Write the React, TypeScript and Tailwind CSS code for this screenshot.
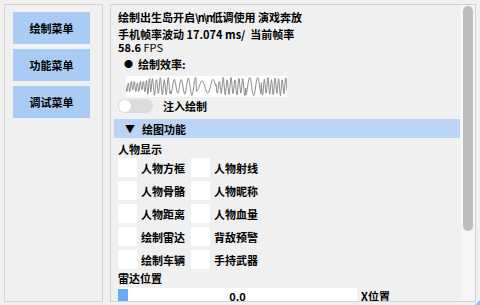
import React from "react";

function Wave() {
  const pts: string[] = [];
  const w = 161;
  const h = 21;
  for (let i = 0; i <= 320; i++) {
    const x = (i / 320) * w;
    const t = x;
    let f = 0.9;
    if (t < 25) f = 1.3;
    else if (t < 45) f = 1.0;
    else if (t < 70) f = 0.55;
    else if (t < 90) f = 0.35;
    else if (t < 120) f = 1.0;
    else if (t < 135) f = 0.5;
    else f = 1.1;
    const amp = t < 20 ? 5 : t < 70 ? 8 : t < 95 ? 6 : 8;
    const y = h / 2 + Math.sin(t * f * 1.6) * amp + Math.sin(t * 0.7) * 1.2;
    pts.push(`${x.toFixed(2)},${y.toFixed(2)}`);
  }
  return (
    <svg width={w} height={h} className="block">
      <polyline points={pts.join(" ")} fill="none" stroke="#8c8c8c" strokeWidth="1" />
    </svg>
  );
}

function Check({ label }: { label: string }) {
  return (
    <div className="flex items-center w-[73px] shrink-0">
      <div className="w-[19px] h-[19px] bg-white shrink-0" />
      <span className="ml-[4px] whitespace-nowrap">{label}</span>
    </div>
  );
}

export default function App() {
  const rows = [
    ["人物方框", "人物射线"],
    ["人物骨骼", "人物昵称"],
    ["人物距离", "人物血量"],
    ["绘制雷达", "背敌预警"],
    ["绘制车辆", "手持武器"],
  ];
  return (
    <div
      className="w-[480px] h-[305px] bg-[#f0f0f0] p-[4px] flex gap-[7px] text-[11px] leading-[14px] text-black font-semibold overflow-hidden relative"
      style={{ fontFamily: '"Noto Sans CJK SC", "Noto Sans", sans-serif' }}
    >
      <div className="w-[99px] h-[298px] border border-[#d2d2d2] shrink-0 pl-[8px] pt-[7px] flex flex-col gap-[5px]">
        {["绘制菜单", "功能菜单", "调试菜单"].map((t) => (
          <div key={t} className="w-[77px] h-[32px] bg-[#aaccf4] flex items-center justify-center">
            {t}
          </div>
        ))}
      </div>
      <div className="flex-1 h-[298px] border border-[#d2d2d2] flex overflow-hidden">
        <div className="flex-1 flex flex-col overflow-hidden pl-[3px] pr-[1px] pt-[5px]">
          <div className="pl-[4px] flex flex-col">
            <div className="whitespace-nowrap h-[14px]">
              绘制出生岛开启<span className="tracking-[-1.5px]">\n\n</span>低调使用 演戏奔放
            </div>
            <div className="mt-[4px] leading-[13px]">
              <div className="whitespace-nowrap h-[13px]">
                手机帧率波动 <span className="font-bold">17.074</span> ms/&nbsp; 当前帧率
              </div>
              <div className="whitespace-nowrap h-[13px]">
                <span className="font-bold">58.6</span> <span className="font-normal">FPS</span>
              </div>
            </div>
            <div className="mt-[3px] flex items-center h-[13px]">
              <span className="ml-[6px] text-[9px]">●</span>
              <span className="ml-[5px]">绘制效率:</span>
            </div>
            <div className="mt-[6px] ml-[8px] w-[161px] h-[21px] bg-white flex items-center">
              <Wave />
            </div>
            <div className="mt-[2px] flex items-center h-[14px]">
              <div className="w-[35px] h-[14px] rounded-full bg-[#dcdcdc] relative">
                <div className="absolute left-[1px] top-[1px] w-[12px] h-[12px] rounded-full bg-white" />
              </div>
              <span className="ml-[10px]">注入绘制</span>
            </div>
          </div>
          <div className="mt-[6px] h-[19px] shrink-0 bg-[#bad4f3] flex items-center">
            <span className="ml-[11px] text-[10px]">▼</span>
            <span className="ml-[7px]">绘图功能</span>
          </div>
          <div className="pl-[4px] flex flex-col">
            <div className="mt-[4px] h-[14px]">人物显示</div>
            <div className="mt-[2px] flex flex-col gap-[4px]">
              {rows.map((r) => (
                <div key={r[0]} className="flex h-[19px]">
                  <Check label={r[0]} />
                  <Check label={r[1]} />
                </div>
              ))}
            </div>
            <div className="mt-[2px] h-[14px]">雷达位置</div>
            <div className="mt-[3px] flex items-start shrink-0">
              <div className="w-[239px] h-[19px] bg-white relative flex justify-center">
                <div className="absolute left-0 top-[1px] w-[10px] h-[17px] bg-[#68aaf8]" />
                <span className="font-bold mt-[1px]">0.0</span>
              </div>
              <span className="ml-[4px] mt-[1px]">X位置</span>
            </div>
          </div>
        </div>
        <div className="w-[14px] shrink-0 bg-[#f5f5f5] pt-[1px] px-[2px]">
          <div className="w-[10px] h-[225px] rounded-full bg-[#bebebe]" />
        </div>
      </div>
      <div className="absolute right-0 bottom-0 w-0 h-0 border-l-[5px] border-l-transparent border-b-[5px] border-b-[#8fbff7]" />
    </div>
  );
}
